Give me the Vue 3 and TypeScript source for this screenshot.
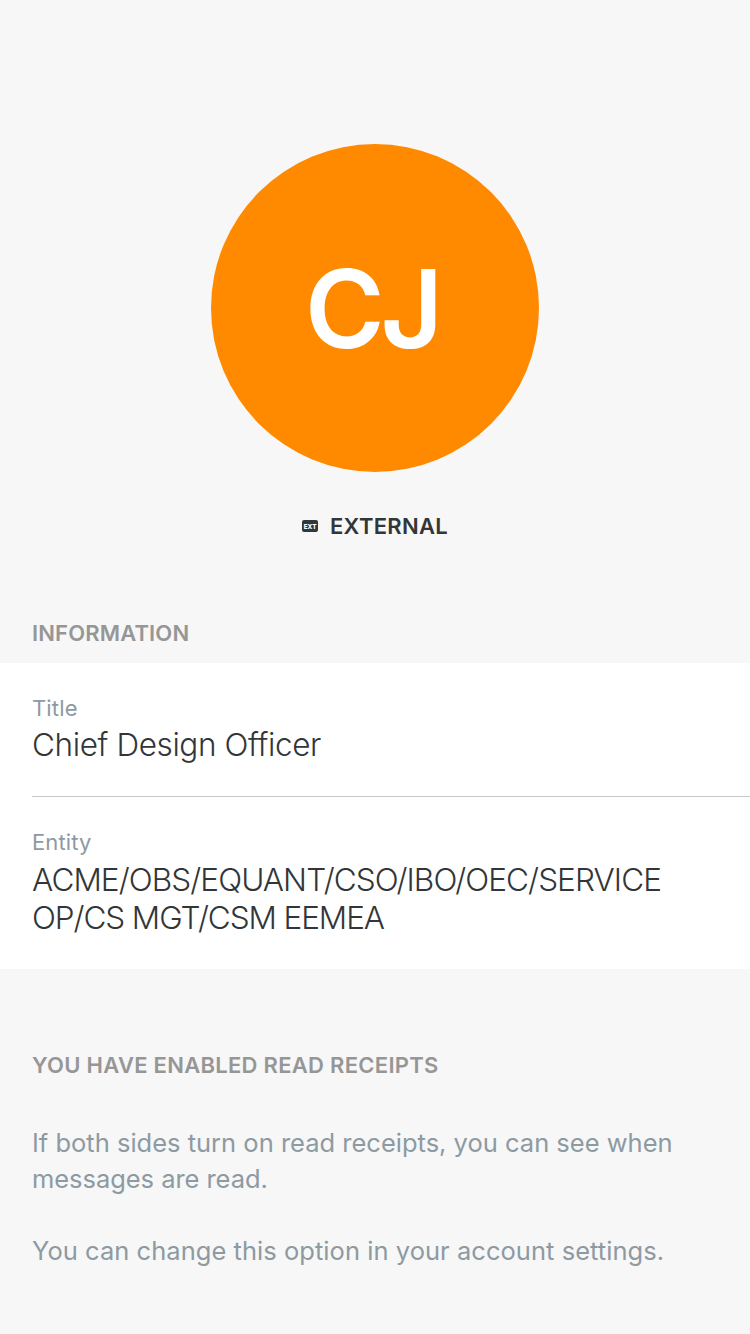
<script setup lang="ts">
interface Field {
  id: string
  label: string
  lines: string[]
}

const fields: Field[] = [
  { id: 'title', label: 'Title', lines: ['Chief Design Officer'] },
  { id: 'entity', label: 'Entity', lines: ['ACME/OBS/EQUANT/CSO/IBO/OEC/SERVICE', 'OP/CS MGT/CSM EEMEA'] },
]
</script>

<template>
  <main class="profile">
    <div class="avatar"><span>CJ</span></div>
    <div class="status">
      <svg class="badge" width="16" height="12" viewBox="0 0 16 12">
        <rect width="16" height="12" rx="2" fill="#33373a" />
        <text x="1.8" y="8.6" textLength="12.6" lengthAdjust="spacingAndGlyphs">EXT</text>
      </svg>
      <span>EXTERNAL</span>
    </div>
    <h2 class="heading info-heading">INFORMATION</h2>
    <section class="fields">
      <div v-for="field in fields" :key="field.id" class="field" :class="field.id">
        <div class="label">{{ field.label }}</div>
        <div v-for="line in field.lines" :key="line" class="value">{{ line }}</div>
      </div>
    </section>
    <h2 class="heading receipts-heading">YOU HAVE ENABLED READ RECEIPTS</h2>
    <p class="note">If both sides turn on read receipts, you can see when<br /><span class="last-line">messages are read.</span></p>
    <p class="note">You can change this option in your account settings.</p>
  </main>
</template>

<style>
body { background: #f7f7f7; }
</style>

<style scoped>
.profile {
  box-sizing: border-box;
  width: 750px;
  height: 1334px;
  padding-top: 144px;
  overflow: hidden;
  background: #f7f7f7;
  font-family: Inter, "Liberation Sans", sans-serif;
}
.avatar {
  box-sizing: border-box;
  display: flex;
  align-items: center;
  justify-content: center;
  width: 328px;
  height: 328px;
  margin: 0 auto;
  padding-right: 6px;
  border-radius: 50%;
  background: #ff8a00;
  color: #fff;
  font-size: 108px;
  font-weight: 600;
  letter-spacing: -4.2px;
}
.status {
  display: flex;
  align-items: center;
  height: 28px;
  margin: 40px 0 0 302px;
  gap: 12px;
  color: #333638;
  font-size: 22px;
  font-weight: 600;
  letter-spacing: 0.3px;
}
.badge text { fill: #fff; font-size: 6.5px; font-weight: 800; letter-spacing: 0; }
.heading {
  height: 28px;
  margin: 0 0 0 32px;
  color: #969696;
  font-size: 22px;
  line-height: 28px;
  font-weight: 600;
  letter-spacing: 0.15px;
}
.info-heading { margin-top: 79px; }
.fields {
  height: 306px;
  margin-top: 16px;
  background: #fff;
}
.field {
  box-sizing: border-box;
  height: 134px;
  margin-left: 32px;
  padding-top: 31px;
  border-bottom: 1px solid #c8c8c8;
}
.field:last-child { border-bottom: 0; }
.label {
  height: 29px;
  color: #8d9aa2;
  font-size: 22px;
  line-height: 28px;
  letter-spacing: 0.15px;
}
.value {
  height: 38px;
  color: #333638;
  font-size: 31.5px;
  line-height: 43px;
  font-weight: 300;
  letter-spacing: -0.4px;
  white-space: nowrap;
}
.entity .label { height: 30px; }
.entity .value { letter-spacing: -0.91px; }
.entity .value:last-child { letter-spacing: -1.08px; }
.receipts-heading { margin-top: 82px; letter-spacing: 0.28px; }
.note {
  margin: 46px 0 0 32px;
  color: #8d9aa2;
  font-size: 25.5px;
  line-height: 36px;
  letter-spacing: 0;
  white-space: nowrap;
}
.last-line { letter-spacing: -0.05px; }
.note + .note { margin-top: 36px; letter-spacing: 0.04px; }
</style>
